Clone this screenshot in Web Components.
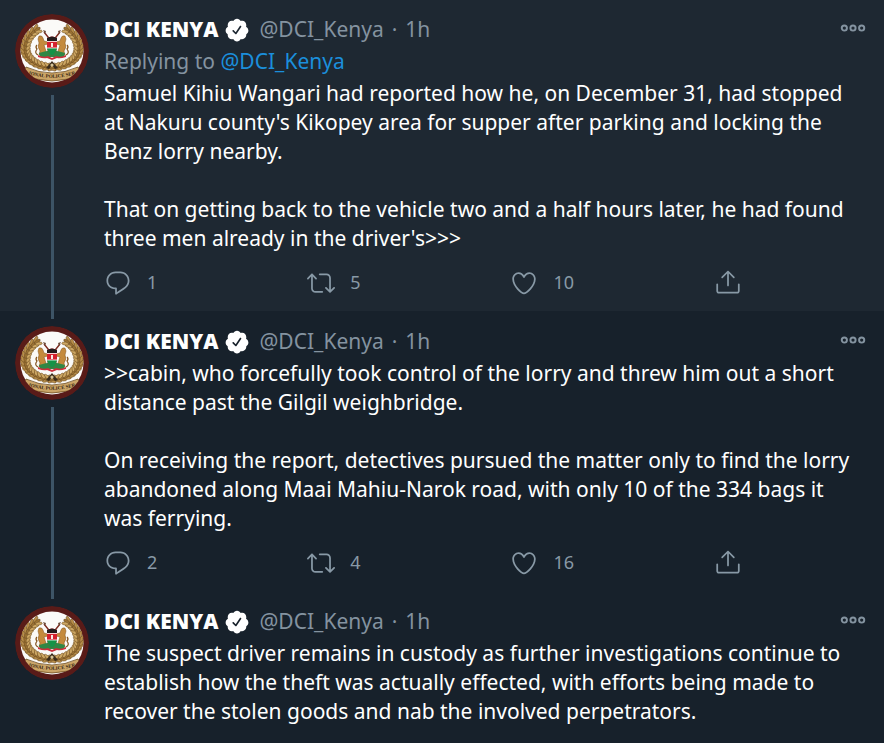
<!DOCTYPE html>
<html lang="en">
<head>
<meta charset="utf-8">
<title>DCI KENYA thread</title>
<style>
  html, body { margin: 0; height: 100%; }
  body {
    background: #17212b;
    color: #fff;
    font: 21px/29px "Noto Sans", "Open Sans", sans-serif;
    overflow: hidden;
  }
</style>
</head>
<body>
<tweet-thread>
  <tweet-post selected replies="1" retweets="5" likes="10">
    <span slot="context">Replying to <tweet-link href="#DCI_Kenya">@DCI_Kenya</tweet-link></span>
    <p>Samuel Kihiu Wangari had reported how he, on December 31, had stopped at Nakuru county's Kikopey area for supper after parking and locking the Benz lorry nearby.</p>
    <p>That on getting back to the vehicle two and a half hours later, he had found three men already in the driver's&gt;&gt;&gt;</p>
  </tweet-post>
  <tweet-post continued replies="2" retweets="4" likes="16">
    <p>&gt;&gt;cabin, who forcefully took control of the lorry and threw him out a short distance past the Gilgil weighbridge.</p>
    <p>On receiving the report, detectives pursued the matter only to find the lorry abandoned along Maai Mahiu-Narok road, with only 10 of the 334 bags it was ferrying.</p>
  </tweet-post>
  <tweet-post continued last>
    <p>The suspect driver remains in custody as further investigations continue to establish how the theft was actually effected, with efforts being made to recover the stolen goods and nab the involved perpetrators.</p>
  </tweet-post>
</tweet-thread>

<script>
const define = (name, html, setup) => customElements.define(name, class extends HTMLElement {
  connectedCallback() {
    if (this.shadowRoot) return;
    const t = document.createElement('template');
    t.innerHTML = html;
    this.attachShadow({ mode: 'open' }).append(t.content.cloneNode(true));
    if (setup) setup(this, this.shadowRoot);
  }
});

const ICONS = {
  reply: '<path d="M14.046 2.242l-4.148-.01h-.002c-4.374 0-7.8 3.427-7.8 7.802 0 4.098 3.186 7.206 7.465 7.37v3.828c0 .108.044.286.12.403.142.225.384.347.632.347.138 0 .277-.038.402-.118.264-.168 6.473-4.14 8.088-5.506 1.902-1.61 3.04-3.97 3.043-6.312v-.017c-.006-4.367-3.43-7.787-7.8-7.788zm3.787 12.972c-1.134.96-4.862 3.405-6.772 4.643V16.67c0-.414-.335-.75-.75-.75h-.396c-3.66 0-6.318-2.476-6.318-5.886 0-3.534 2.768-6.302 6.3-6.302l4.147.01h.002c3.532 0 6.3 2.766 6.302 6.296-.003 1.91-.942 3.844-2.514 5.176z"/>',
  retweet: '<path d="M23.77 15.67c-.292-.293-.767-.293-1.06 0l-2.22 2.22V7.65c0-2.068-1.683-3.75-3.75-3.75h-5.85c-.414 0-.75.336-.75.75s.336.75.75.75h5.85c1.24 0 2.25 1.01 2.25 2.25v10.24l-2.22-2.22c-.293-.293-.768-.293-1.06 0s-.294.768 0 1.06l3.5 3.5c.145.147.337.22.53.22s.383-.072.53-.22l3.5-3.5c.294-.292.294-.767 0-1.06zm-10.66 3.28H7.26c-1.24 0-2.25-1.01-2.25-2.25V6.46l2.22 2.22c.148.147.34.22.532.22s.384-.073.53-.22c.293-.293.293-.768 0-1.06l-3.5-3.5c-.293-.294-.768-.294-1.06 0l-3.5 3.5c-.294.292-.294.767 0 1.06s.767.293 1.06 0l2.22-2.22V16.7c0 2.068 1.683 3.75 3.75 3.75h5.85c.414 0 .75-.336.75-.75s-.337-.75-.75-.75z"/>',
  like: '<path d="M12 21.638h-.014C9.403 21.59 1.95 14.856 1.95 8.478c0-3.064 2.525-5.754 5.403-5.754 2.29 0 3.83 1.58 4.646 2.73.814-1.148 2.354-2.73 4.645-2.73 2.88 0 5.404 2.69 5.404 5.755 0 6.376-7.454 13.11-10.037 13.157H12zM7.354 4.225c-2.08 0-3.903 1.988-3.903 4.255 0 5.74 7.034 11.596 8.55 11.658 1.518-.062 8.55-5.917 8.55-11.658 0-2.267-1.823-4.255-3.903-4.255-2.528 0-3.94 2.936-3.952 2.965-.23.562-1.156.562-1.387 0-.014-.03-1.425-2.965-3.954-2.965z"/>',
  share: '<path d="M17.53 7.47l-5-5c-.293-.293-.768-.293-1.06 0l-5 5c-.294.293-.294.768 0 1.06s.767.294 1.06 0l3.72-3.72V15c0 .414.336.75.75.75s.75-.336.75-.75V4.81l3.72 3.72c.146.147.338.22.53.22s.384-.072.53-.22c.293-.293.293-.767 0-1.06z"/><path d="M19.708 21.944H4.292C3.028 21.944 2 20.916 2 19.652V14c0-.414.336-.75.75-.75s.75.336.75.75v5.652c0 .437.355.792.792.792h15.416c.437 0 .792-.355.792-.792V14c0-.414.336-.75.75-.75s.75.336.75.75v5.652c0 1.264-1.028 2.292-2.292 2.292z"/>',
  verified: '<path d="M22.5 12.5c0-1.58-.875-2.95-2.148-3.6.154-.435.238-.905.238-1.4 0-2.21-1.71-3.998-3.818-3.998-.47 0-.92.084-1.336.25C14.818 2.415 13.51 1.5 12 1.5s-2.816.917-3.437 2.25c-.415-.165-.866-.25-1.336-.25-2.11 0-3.818 1.79-3.818 4 0 .494.083.964.237 1.4-1.272.65-2.147 2.018-2.147 3.6 0 1.495.782 2.798 1.942 3.486-.02.17-.032.34-.032.514 0 2.21 1.708 4 3.818 4 .47 0 .92-.086 1.335-.25.62 1.334 1.926 2.25 3.437 2.25 1.512 0 2.818-.916 3.437-2.25.415.163.865.248 1.336.248 2.11 0 3.818-1.79 3.818-4 0-.174-.012-.344-.033-.513 1.158-.687 1.943-1.99 1.943-3.484zm-6.616-3.334l-4.334 6.5c-.145.217-.382.334-.625.334-.143 0-.288-.04-.416-.126l-.115-.094-2.415-2.415c-.293-.293-.293-.768 0-1.06s.768-.294 1.06 0l1.77 1.767 3.825-5.74c.23-.345.696-.436 1.04-.207.346.23.44.696.21 1.04z"/>',
  more: '<g fill="none" stroke="currentColor" stroke-width="1.8"><circle cx="4" cy="12" r="2.4"/><circle cx="12" cy="12" r="2.4"/><circle cx="20" cy="12" r="2.4"/></g>'
};

define('tweet-icon', `
  <style>
    :host { display: block; flex: none; width: var(--size, 28px); height: var(--size, 28px); }
    svg { display: block; width: 100%; height: 100%; fill: currentColor; }
  </style>
  <svg viewBox="0 0 24 24" aria-hidden="true"></svg>`,
  (el, root) => { root.querySelector('svg').innerHTML = ICONS[el.getAttribute('name')]; });

define('tweet-link', `
  <style>
    :host { display: inline; }
    a { color: #1b8fdc; text-decoration: none; }
  </style>
  <a><slot></slot></a>`,
  (el, root) => { root.querySelector('a').href = el.getAttribute('href'); });

/* One laurel branch: rows of leaves along the left arc, mirrored for the right one. */
const leaves = () => {
  let out = '';
  for (let i = 0; i < 15; i++) {
    const deg = 92 + i * 10.3, a = deg * Math.PI / 180;
    const squash = Math.sin(a) > 0 ? .68 : .88;
    [[29.5, -26, '#b98f4a'], [26.6, 0, '#9c7334'], [23.8, 26, '#cda763']].forEach(([r, tilt, fill]) => {
      const x = 37 + r * Math.cos(a), y = 35 + r * Math.sin(a) * squash;
      out += `<ellipse cx="${x.toFixed(1)}" cy="${y.toFixed(1)}" rx="3.5" ry="1.5" fill="${fill}" stroke="#6a4a20" stroke-width=".5" transform="rotate(${(deg + 90 + tilt).toFixed(1)} ${x.toFixed(1)} ${y.toFixed(1)})"/>`;
    });
  }
  return out;
};

define('tweet-avatar', `
  <style>
    :host { display: block; flex: none; width: 74px; height: 74px; }
    svg { display: block; width: 100%; height: 100%; border-radius: 50%; }
  </style>
  <svg viewBox="0 0 74 74" role="img" aria-label="DCI KENYA">
    <defs>
      <clipPath id="disc"><circle cx="37" cy="37" r="32"/></clipPath>
      <path id="ribbon" d="M8 58.5Q37 69 66 58.5"/>
    </defs>
    <circle cx="37" cy="37" r="37" fill="#591b18"/>
    <circle cx="37" cy="37" r="31.5" fill="#fbfaf8"/>
    <g clip-path="url(#disc)">
      <g>${leaves()}</g>
      <g transform="matrix(-1 0 0 1 74 0)">${leaves()}</g>
      <path d="M31 54l6-7 6 7-3 1-3-4-3 4z" fill="#3a2c1c"/>
      <circle cx="37" cy="51" r="1.6" fill="#d5c49a"/>
      <path d="M11 53Q37 65 63 53l3 7Q37 74 8 60z" fill="#cba567" stroke="#6d4c21" stroke-width=".8"/>
      <text font-family="Liberation Serif, serif" font-size="5" font-weight="700" fill="#35230f" text-anchor="middle"><textPath href="#ribbon" startOffset="50%">IONAL POLICE SER</textPath></text>
    </g>
    <path d="M29 18l8 10M45 18l-8 10" stroke="#7d2a20" stroke-width="1.4"/>
    <path d="M28 16l3 1-1 3zM46 16l-3 1 1 3z" fill="#6a4a38"/>
    <g fill="#c48a3c" stroke="#83541f" stroke-width=".5">
      <path d="M24 22q3-1 4 2l1 3 4 1v2l-4 1 2 6-1 4h-6l1-4q-3-4-1-8l-1-4z"/>
      <path d="M23 41q-4-2-1-6-2-2 0-4" fill="none" stroke-width="1.2"/>
    </g>
    <g transform="matrix(-1 0 0 1 74 0)" fill="#c48a3c" stroke="#83541f" stroke-width=".5">
      <path d="M24 22q3-1 4 2l1 3 4 1v2l-4 1 2 6-1 4h-6l1-4q-3-4-1-8l-1-4z"/>
      <path d="M23 41q-4-2-1-6-2-2 0-4" fill="none" stroke-width="1.2"/>
    </g>
    <path d="M24 39q13-5 26 0l-1 4H25z" fill="#2f8745"/>
    <path d="M32 24q5-3 10 0v10q-1 6-5 8-4-2-5-8z" fill="#d5212e"/>
    <path d="M32 24q5-3 10 0v3H32z" fill="#241c1c"/>
    <path d="M32 34h10q-1 6-5 8-4-2-5-8z" fill="#159347"/>
    <path d="M32 27.5h10M32 34h10" stroke="#fff" stroke-width=".8"/>
    <path d="M36 29h2v4h-2z" fill="#f8ece8"/>
    <path d="M23 41q5 3 10 1l4 2 4-2q5 2 10-1v2q-6 2-9 1l-5 2-5-2q-3 1-9-1z" fill="#c9303c"/>
  </svg>`);

define('tweet-action', `
  <style>
    :host { display: block; flex: 4; color: #8899a6; }
    :host([name="share"]) { flex: 3; }
    button {
      display: flex; align-items: center; gap: 15px;
      padding: 0; border: 0; background: none; color: inherit;
      font: inherit; font-size: 18px; line-height: 29px; cursor: pointer;
    }
  </style>
  <button type="button"><tweet-icon></tweet-icon><span></span></button>`,
  (el, root) => {
    const name = el.getAttribute('name');
    const icon = document.createElement('tweet-icon');
    icon.setAttribute('name', name);
    root.querySelector('tweet-icon').replaceWith(icon);
    root.querySelector('button').setAttribute('aria-label', name);
    root.querySelector('span').textContent = el.getAttribute('count') || '';
  });

define('tweet-post', `
  <style>
    :host { display: flex; gap: 15px; padding: 0 18px 0 15px; }
    :host([selected]) { background: #1e2832; }
    .rail { display: flex; flex-direction: column; align-items: center; gap: 7px; }
    .stub, .line { width: 3px; background: #3d5466; }
    .stub { height: 8px; background: none; }
    :host([continued]) .stub { background: #3d5466; }
    .line { flex: 1; }
    :host([last]) .line { display: none; }
    .main { flex: 1; min-width: 0; display: flex; flex-direction: column; gap: 3px; padding: 16px 0 14px; }
    header { display: flex; align-items: center; color: #8493a0; }
    .name { color: #fff; font-family: "Open Sans", sans-serif; font-weight: 800; }
    .badge { --size: 26px; color: #fff; margin: 0 9px 0 6px; }
    .dot { margin: 0 8px; }
    .more { align-self: flex-start; margin-left: auto; padding: 0; border: 0; background: none; color: #8493a0; cursor: pointer; }
    .more tweet-icon { --size: 26px; }
    .context { color: #8493a0; }
    :host([continued]) .context { display: none; }
    .body { display: flex; flex-direction: column; gap: 29px; }
    ::slotted(p) { margin: 0; }
    footer { display: flex; margin-top: 12px; }
  </style>
  <div class="rail"><div class="stub"></div><tweet-avatar></tweet-avatar><div class="line"></div></div>
  <article class="main">
    <header>
      <span class="name">DCI KENYA</span>
      <tweet-icon class="badge" name="verified"></tweet-icon>
      <span>@DCI_Kenya</span><span class="dot">·</span><span>1h</span>
      <button class="more" type="button" aria-label="More"><tweet-icon name="more"></tweet-icon></button>
    </header>
    <div class="context"><slot name="context"></slot></div>
    <div class="body"><slot></slot></div>
    <footer></footer>
  </article>`,
  (el, root) => {
    const actions = { reply: 'replies', retweet: 'retweets', like: 'likes', share: '' };
    for (const [name, attr] of Object.entries(actions)) {
      const action = document.createElement('tweet-action');
      action.setAttribute('name', name);
      action.setAttribute('count', (attr && el.getAttribute(attr)) || '');
      root.querySelector('footer').append(action);
    }
  });

define('tweet-thread', `
  <style>:host { display: block; margin-top: -1px; }</style>
  <main><slot></slot></main>`);
</script>
</body>
</html>
